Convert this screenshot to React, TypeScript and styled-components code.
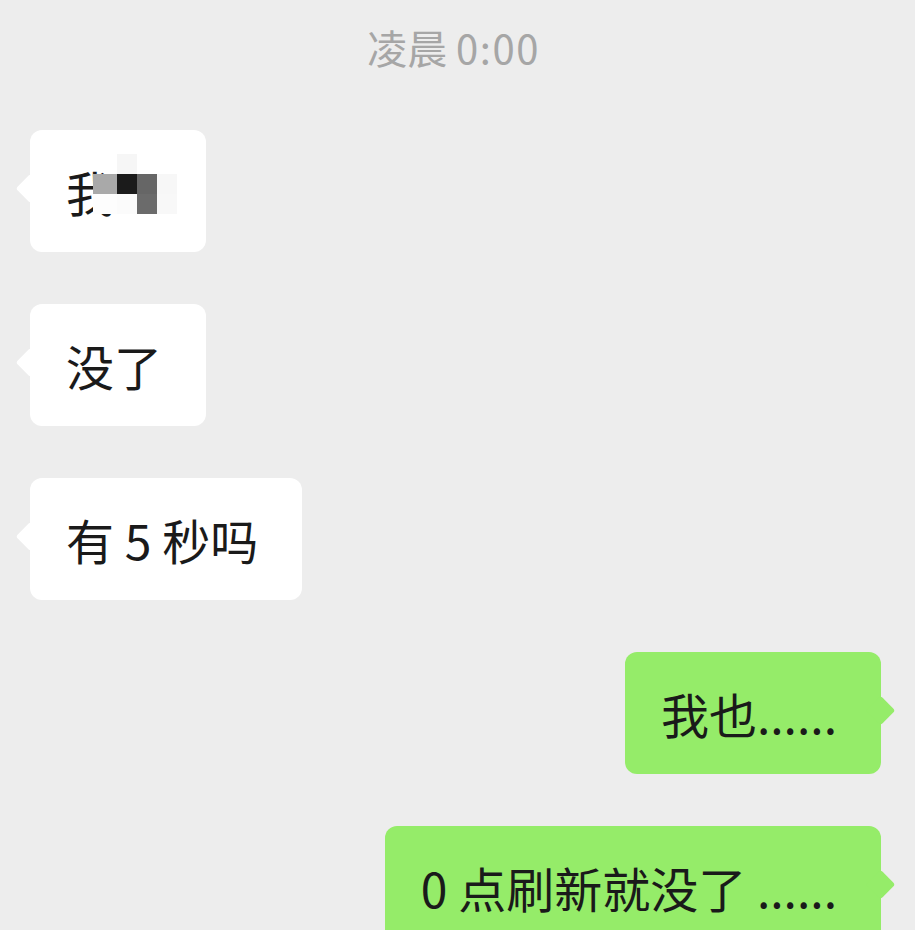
import styled, { createGlobalStyle } from 'styled-components';

const GlobalStyle = createGlobalStyle`
  html, body {
    margin: 0;
    padding: 0;
    background: #ededed;
  }
  body {
    font-family: 'Noto Sans CJK SC', 'Noto Sans', sans-serif;
  }
`;

type Side = 'left' | 'right';

const messages: { side: Side; text: string; redacted?: boolean }[] = [
  { side: 'left', text: '我', redacted: true },
  { side: 'left', text: '没了' },
  { side: 'left', text: '有 5 秒吗' },
  { side: 'right', text: '我也......' },
  { side: 'right', text: '0 点刷新就没了 ......' },
];

// mosaic over the redacted part of the first message
const mosaic = [
  ['transparent', '#f6f6f6', 'transparent', 'transparent'],
  ['#a9a9a9', '#1b1b1b', '#666666', '#f7f7f7'],
  ['#fdfdfd', '#fbfbfb', '#6b6b6b', '#f8f8f8'],
];

const App = () => {
  return (
    <>
      <GlobalStyle />
      <Screen>
        <Time>
          凌晨 <Clock>0:00</Clock>
        </Time>
        <List>
          {messages.map((m, i) => (
            <Row key={i} $side={m.side}>
              <Bubble $side={m.side}>
                {m.redacted ? (
                  <Redacted>
                    {m.text}
                    <Mosaic>
                      {mosaic.flat().map((c, j) => (
                        <Cell key={j} $color={c} />
                      ))}
                    </Mosaic>
                  </Redacted>
                ) : (
                  m.text
                )}
              </Bubble>
            </Row>
          ))}
        </List>
      </Screen>
    </>
  );
};

export default App;

const Screen = styled.div`
  width: 915px;
  height: 930px;
  overflow: hidden;
  background: #ededed;
`;

const Time = styled.div`
  padding: 24px 8px 60px 0;
  text-align: center;
  font-size: 40px;
  line-height: 46px;
  color: #a6a6a6;
`;

const Clock = styled.span`
  letter-spacing: 1.5px;
`;

const List = styled.div`
  display: flex;
  flex-direction: column;
  gap: 52px;
  padding: 0 34px 0 30px;
`;

const Row = styled.div<{ $side: Side }>`
  display: flex;
  justify-content: ${({ $side }) => ($side === 'left' ? 'flex-start' : 'flex-end')};
`;

const Bubble = styled.div<{ $side: Side }>`
  position: relative;
  padding: 31px 44px 30px 36px;
  font-size: 48px;
  line-height: 61px;
  color: #1a1a1a;
  white-space: nowrap;
  border-radius: 12px;
  background: ${({ $side }) => ($side === 'left' ? '#ffffff' : '#95ec69')};

  &::before {
    content: '';
    position: absolute;
    top: 48px;
    ${({ $side }) => ($side === 'left' ? 'left: -10px;' : 'right: -10px;')}
    width: 21px;
    height: 21px;
    border-radius: 3px;
    background: inherit;
    transform: rotate(45deg);
  }
`;

const Redacted = styled.span`
  position: relative;
  display: inline-block;
  width: 96px;
`;

const Mosaic = styled.span`
  position: absolute;
  left: 27px;
  top: -7px;
  display: grid;
  grid-template-columns: 24px 20px 20px 20px;
  grid-auto-rows: 20px;
`;

const Cell = styled.span<{ $color: string }>`
  background: ${({ $color }) => $color};
`;
